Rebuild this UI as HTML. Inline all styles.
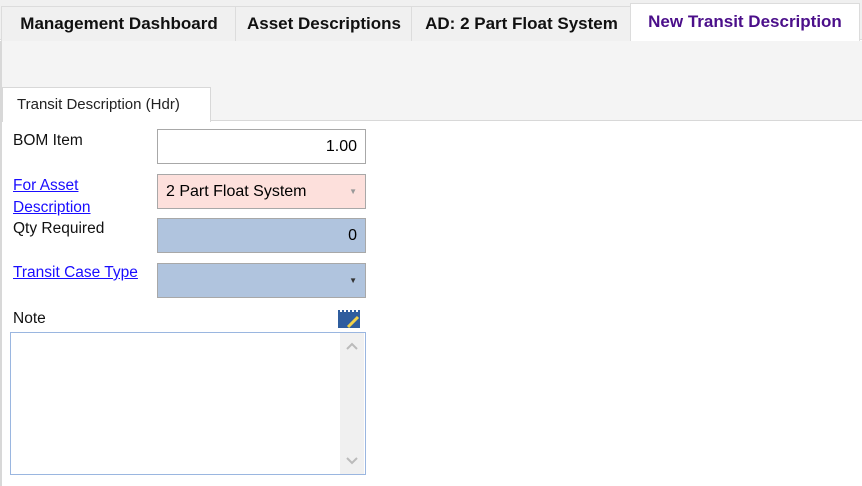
<!DOCTYPE html>
<html><head><meta charset="utf-8"><style>
body{margin:0;width:862px;height:486px;overflow:hidden;background:#fff;font-family:"Liberation Sans",Arial,sans-serif;position:relative}
.a{position:absolute;box-sizing:border-box}
.tab{position:absolute;top:6px;height:34px;background:#f0f0f0;border:1px solid #dcdcdc;border-bottom:none;font-weight:bold;font-size:17px;line-height:34px;text-align:center;color:#111}
.lbl{position:absolute;font-size:15.5px;color:#111;left:13px}
.lnk{color:#1a0dff;text-decoration:underline}
.inp{position:absolute;left:157px;width:209px;height:35px;border:1px solid #a8a8a8;box-sizing:border-box;font-size:16px;line-height:33px;padding:0 8px}
</style></head><body>
<div class="a" style="left:0;top:0;width:862px;height:40px;background:#f0f0f0;border-bottom:1px solid #dcdcdc"></div>
<div class="tab" style="left:1px;width:234px">Management Dashboard</div>
<div class="tab" style="left:235px;width:176px">Asset Descriptions</div>
<div class="tab" style="left:411px;width:219px">AD: 2 Part Float System</div>
<div class="tab" style="left:630px;top:3px;height:38px;width:228px;background:#fff;color:#4b0f8a;line-height:36px">New Transit Description</div>
<div class="a" style="left:0;top:41px;width:862px;height:80px;background:#f4f4f4;border-left:2px solid #d8d8d8;border-bottom:1px solid #d8d8d8"></div>
<div class="a" style="left:2px;top:87px;width:209px;height:35px;background:#fff;border:1px solid #d8d8d8;border-bottom:none;font-size:15px;line-height:33px;padding-left:14px;color:#222">Transit Description (Hdr)</div>
<div class="a" style="left:0;top:121px;width:2px;height:365px;background:#d8d8d8"></div>
<div class="lbl" style="top:132px">BOM Item</div>
<div class="inp" style="top:129px;background:#fff;text-align:right">1.00</div>
<div class="lbl lnk" style="top:175px;line-height:22px">For Asset<br>Description</div>
<div class="inp" style="top:174px;background:#fde0dc">2 Part Float System<span style="position:absolute;right:8px;top:0;font-size:8px;color:#999">▼</span></div>
<div class="lbl" style="top:220px">Qty Required</div>
<div class="inp" style="top:218px;background:#b0c4de;text-align:right">0</div>
<div class="lbl lnk" style="top:264px">Transit Case Type</div>
<div class="inp" style="top:263px;background:#b0c4de"><span style="position:absolute;right:8px;top:0;font-size:8px;color:#333">▼</span></div>
<div class="lbl" style="top:310px">Note</div>
<svg class="a" style="left:337px;top:307px" width="24" height="22"><rect x="1" y="3" width="22" height="18" fill="#2f5d9e"/><g fill="#fff"><rect x="3" y="1" width="2" height="4"/><rect x="7" y="1" width="2" height="4"/><rect x="11" y="1" width="2" height="4"/><rect x="15" y="1" width="2" height="4"/><rect x="19" y="1" width="2" height="4"/></g><path d="M11 20 L21 10" stroke="#f2d24a" stroke-width="3"/></svg>
<div class="a" style="left:10px;top:332px;width:356px;height:143px;border:1px solid #9ab6e0;background:#fff"></div>
<div class="a" style="left:340px;top:333px;width:24px;height:141px;background:#f0f0f0"></div>
<svg class="a" style="left:344px;top:340px" width="16" height="130"><path d="M3 9 L8 4 L13 9" stroke="#bbb" stroke-width="2" fill="none"/><path d="M3 118 L8 123 L13 118" stroke="#bbb" stroke-width="2" fill="none"/></svg>
</body></html>
